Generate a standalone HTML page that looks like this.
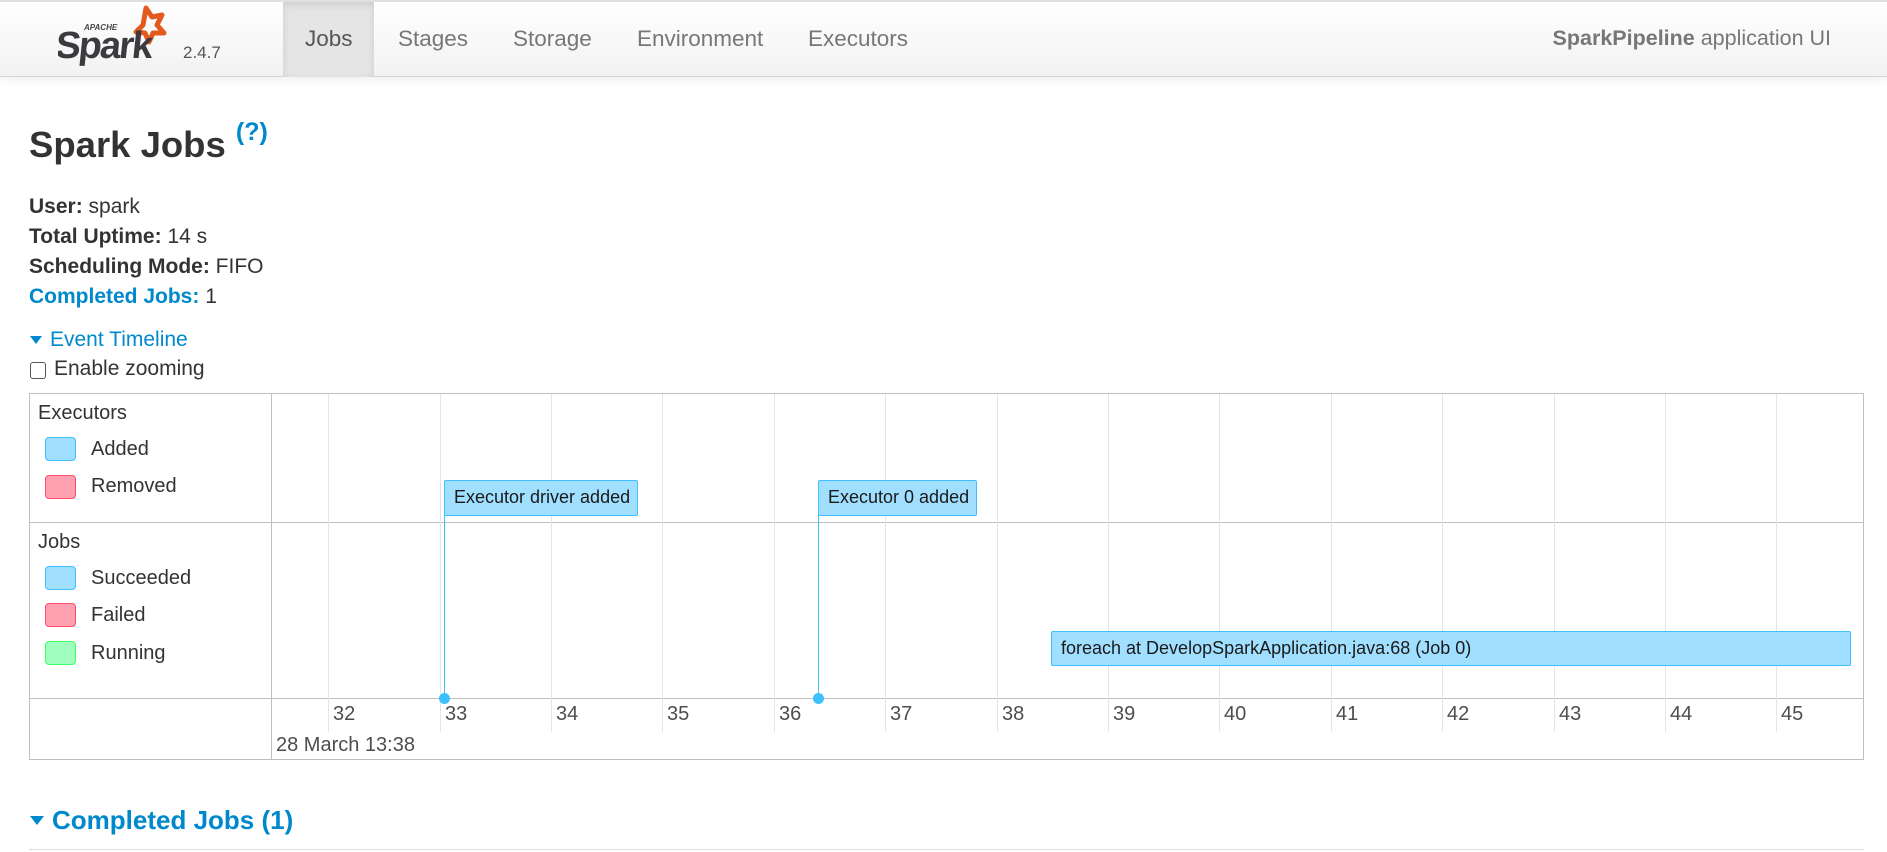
<!DOCTYPE html>
<html><head><meta charset="utf-8"><style>
*{margin:0;padding:0;box-sizing:border-box}
body{width:1887px;height:852px;overflow:hidden;background:#fff;font-family:"Liberation Sans",Arial,sans-serif;color:#333;position:relative}
.a{position:absolute;white-space:nowrap}
.nav{position:absolute;left:0;top:0;width:1887px;height:77px;background:linear-gradient(#fff,#f2f2f2);border-top:2px solid #e0e0e0;border-bottom:1px solid #d4d4d4;box-shadow:0 2px 10px rgba(0,0,0,.08)}
.tab{position:absolute;top:0;height:75px;line-height:74px;font-size:22.5px;color:#777}
.lg{font-size:21px;color:#333}
.sw{position:absolute;width:31px;height:24px;border-radius:4px}
.bl{background:#A0DFFF;border:1px solid #3EC0FF}
.rd{background:#FFA1B0;border:1px solid #FF4D6D}
.gr{background:#A0FFBF;border:1px solid #3EFF6C}
.gl{position:absolute;width:1px;background:#e5e5e5}
.box{position:absolute;background:#A0DFFF;border:1px solid #3EC0FF;border-radius:2px;font-size:18px;color:#1a1a1a;padding-left:9px;line-height:33px;white-space:nowrap}
.tk{position:absolute;top:703px;font-size:20px;color:#4d4d4d}
</style></head><body>
<div class="nav">
 <svg class="a" style="left:58px;top:2px" width="120" height="62" viewBox="0 0 120 62">
  <path d="M88 4 L94 13 L104 11 L99 21 L106 29 L95 29 L91 38 L87 29 L78 28 L85 21 Z" fill="none" stroke="#e25a1c" stroke-width="5" stroke-linejoin="round"/>
  <text x="26" y="26" font-family="Liberation Sans" font-size="8" font-weight="bold" fill="#444" font-style="italic">APACHE</text>
  <text x="2" y="54" font-family="Liberation Sans" font-size="38" font-weight="bold" fill="#3c3a3e" letter-spacing="-2" transform="skewX(-6)">Spark</text>
 </svg>
 <div class="a" style="left:183px;top:41px;font-size:17px;color:#555">2.4.7</div>
 <div class="a" style="left:283px;top:0;width:91px;height:75px;background:#e5e5e5;box-shadow:inset 0 3px 8px rgba(0,0,0,.1)"></div>
 <div class="tab" style="left:305px;color:#555">Jobs</div>
 <div class="tab" style="left:398px">Stages</div>
 <div class="tab" style="left:513px">Storage</div>
 <div class="tab" style="left:637px">Environment</div>
 <div class="tab" style="left:808px">Executors</div>
 <div class="a" style="right:56px;top:24px;font-size:21.5px;color:#777"><b>SparkPipeline</b> application UI</div>
</div>

<div class="a" style="left:29px;top:122px;font-size:36.5px;font-weight:bold;color:#333">Spark Jobs <sup style="font-size:25px;color:#0088cc;font-weight:bold;position:relative;top:-4px">(?)</sup></div>
<div class="a lg" style="left:29px;top:192px;line-height:30px"><b>User:</b> spark<br><b>Total Uptime:</b> 14 s<br><b>Scheduling Mode:</b> FIFO<br><b style="color:#0088cc">Completed Jobs:</b> 1</div>
<div class="a" style="left:30px;top:336px;width:0;height:0;border-left:6px solid transparent;border-right:6px solid transparent;border-top:8px solid #0088cc"></div>
<div class="a lg" style="left:50px;top:328px;color:#0088cc">Event Timeline</div>
<div class="a" style="left:30px;top:362px;width:16px;height:17px;border:1px solid #555;border-radius:3px;background:#fff"></div>
<div class="a lg" style="left:54px;top:357px">Enable zooming</div>

<div class="a" style="left:29px;top:393px;width:1835px;height:367px;border:1px solid #bfbfbf"></div>
<div class="a" style="left:271px;top:393px;width:1px;height:367px;background:#bfbfbf"></div>
<div class="a" style="left:29px;top:522px;width:1835px;height:1px;background:#bfbfbf"></div>
<div class="a" style="left:29px;top:698px;width:1835px;height:1px;background:#bfbfbf"></div>
<div class="gl" style="left:328px;top:394px;height:338px"></div>
<div class="gl" style="left:440px;top:394px;height:338px"></div>
<div class="gl" style="left:551px;top:394px;height:338px"></div>
<div class="gl" style="left:662px;top:394px;height:338px"></div>
<div class="gl" style="left:774px;top:394px;height:338px"></div>
<div class="gl" style="left:885px;top:394px;height:338px"></div>
<div class="gl" style="left:997px;top:394px;height:338px"></div>
<div class="gl" style="left:1108px;top:394px;height:338px"></div>
<div class="gl" style="left:1219px;top:394px;height:338px"></div>
<div class="gl" style="left:1331px;top:394px;height:338px"></div>
<div class="gl" style="left:1442px;top:394px;height:338px"></div>
<div class="gl" style="left:1554px;top:394px;height:338px"></div>
<div class="gl" style="left:1665px;top:394px;height:338px"></div>
<div class="gl" style="left:1776px;top:394px;height:338px"></div>

<div class="a lg" style="left:38px;top:402px;font-size:20px">Executors</div>
<div class="sw bl" style="left:45px;top:437px"></div><div class="a lg" style="left:91px;top:438px;font-size:20px">Added</div>
<div class="sw rd" style="left:45px;top:475px"></div><div class="a lg" style="left:91px;top:475px;font-size:20px">Removed</div>
<div class="a lg" style="left:38px;top:531px;font-size:20px">Jobs</div>
<div class="sw bl" style="left:45px;top:566px"></div><div class="a lg" style="left:91px;top:567px;font-size:20px">Succeeded</div>
<div class="sw rd" style="left:45px;top:603px"></div><div class="a lg" style="left:91px;top:604px;font-size:20px">Failed</div>
<div class="sw gr" style="left:45px;top:641px"></div><div class="a lg" style="left:91px;top:642px;font-size:20px">Running</div>

<div class="a" style="left:444px;top:515px;width:1px;height:183px;background:#3EC0FF"></div>
<div class="a" style="left:439px;top:693px;width:11px;height:11px;border-radius:50%;background:#3EC0FF"></div>
<div class="box" style="left:444px;top:480px;width:194px;height:36px">Executor driver added</div>
<div class="a" style="left:818px;top:515px;width:1px;height:183px;background:#3EC0FF"></div>
<div class="a" style="left:813px;top:693px;width:11px;height:11px;border-radius:50%;background:#3EC0FF"></div>
<div class="box" style="left:818px;top:480px;width:159px;height:36px">Executor 0 added</div>
<div class="box" style="left:1051px;top:631px;width:800px;height:35px">foreach at DevelopSparkApplication.java:68 (Job 0)</div>

<div class="tk" style="left:333px">32</div><div class="tk" style="left:445px">33</div><div class="tk" style="left:556px">34</div><div class="tk" style="left:667px">35</div><div class="tk" style="left:779px">36</div><div class="tk" style="left:890px">37</div><div class="tk" style="left:1002px">38</div><div class="tk" style="left:1113px">39</div><div class="tk" style="left:1224px">40</div><div class="tk" style="left:1336px">41</div><div class="tk" style="left:1447px">42</div><div class="tk" style="left:1559px">43</div><div class="tk" style="left:1670px">44</div><div class="tk" style="left:1781px">45</div>
<div class="a" style="left:276px;top:734px;font-size:20px;color:#4d4d4d">28 March 13:38</div>

<div class="a" style="left:30px;top:816px;width:0;height:0;border-left:7px solid transparent;border-right:7px solid transparent;border-top:9px solid #0088cc"></div>
<div class="a" style="left:52px;top:805px;font-size:26px;font-weight:bold;color:#0088cc">Completed Jobs (1)</div>
<div class="a" style="left:29px;top:849px;width:1835px;height:1px;background:#ddd"></div>
</body></html>
